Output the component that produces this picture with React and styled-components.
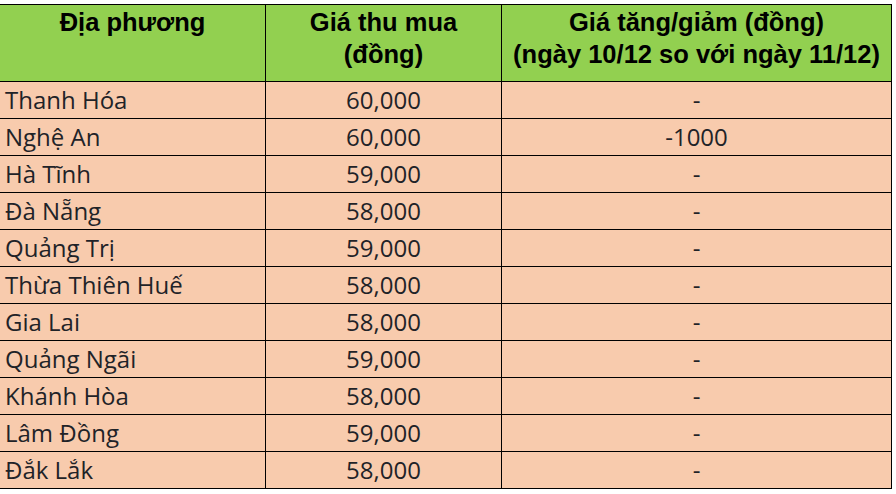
import React from "react";
import styled, { createGlobalStyle } from "styled-components";

const GlobalStyle = createGlobalStyle`
  html, body {
    margin: 0;
    padding: 0;
    background: #ffffff;
  }
`;

const Page = styled.div`
  width: 896px;
  height: 494px;
  padding-top: 4px;
  box-sizing: border-box;
  overflow: hidden;
`;

const Table = styled.table`
  border-collapse: collapse;
  table-layout: fixed;
  width: 892px;
  margin-left: -1px;
`;

const HeadCell = styled.th`
  background: #92d050;
  border: 1px solid #000;
  height: 75px;
  padding: 1px 2px 0;
  vertical-align: top;
  text-align: center;
  font-family: "Liberation Sans", Arial, sans-serif;
  font-weight: 700;
  font-size: 25.5px;
  line-height: 32px;
  color: #000;
  white-space: nowrap;
`;

const Cell = styled.td`
  background: #f8cbad;
  border: 1px solid #000;
  height: 36px;
  padding: 0 5px;
  text-align: ${({ align }) => align || "left"};
  vertical-align: middle;
  font-family: "Open Sans", "Noto Sans", sans-serif;
  font-size: 24px;
  line-height: 30px;
  color: #1f2328;
  white-space: nowrap;
`;

const rows = [
  ["Thanh Hóa", "60,000", "-"],
  ["Nghệ An", "60,000", "-1000"],
  ["Hà Tĩnh", "59,000", "-"],
  ["Đà Nẵng", "58,000", "-"],
  ["Quảng Trị", "59,000", "-"],
  ["Thừa Thiên Huế", "58,000", "-"],
  ["Gia Lai", "58,000", "-"],
  ["Quảng Ngãi", "59,000", "-"],
  ["Khánh Hòa", "58,000", "-"],
  ["Lâm Đồng", "59,000", "-"],
  ["Đắk Lắk", "58,000", "-"],
];

export default function App() {
  return (
    <Page>
      <GlobalStyle />
      <Table>
        <colgroup>
          <col style={{ width: 266 }} />
          <col style={{ width: 236 }} />
          <col style={{ width: 390 }} />
        </colgroup>
        <thead>
          <tr>
            <HeadCell>Địa phương</HeadCell>
            <HeadCell>
              Giá thu mua
              <br />
              (đồng)
            </HeadCell>
            <HeadCell>
              Giá tăng/giảm (đồng)
              <br />
              (ngày 10/12 so với ngày 11/12)
            </HeadCell>
          </tr>
        </thead>
        <tbody>
          {rows.map(([place, price, change]) => (
            <tr key={place}>
              <Cell>{place}</Cell>
              <Cell align="center">{price}</Cell>
              <Cell align="center">{change}</Cell>
            </tr>
          ))}
        </tbody>
      </Table>
    </Page>
  );
}
